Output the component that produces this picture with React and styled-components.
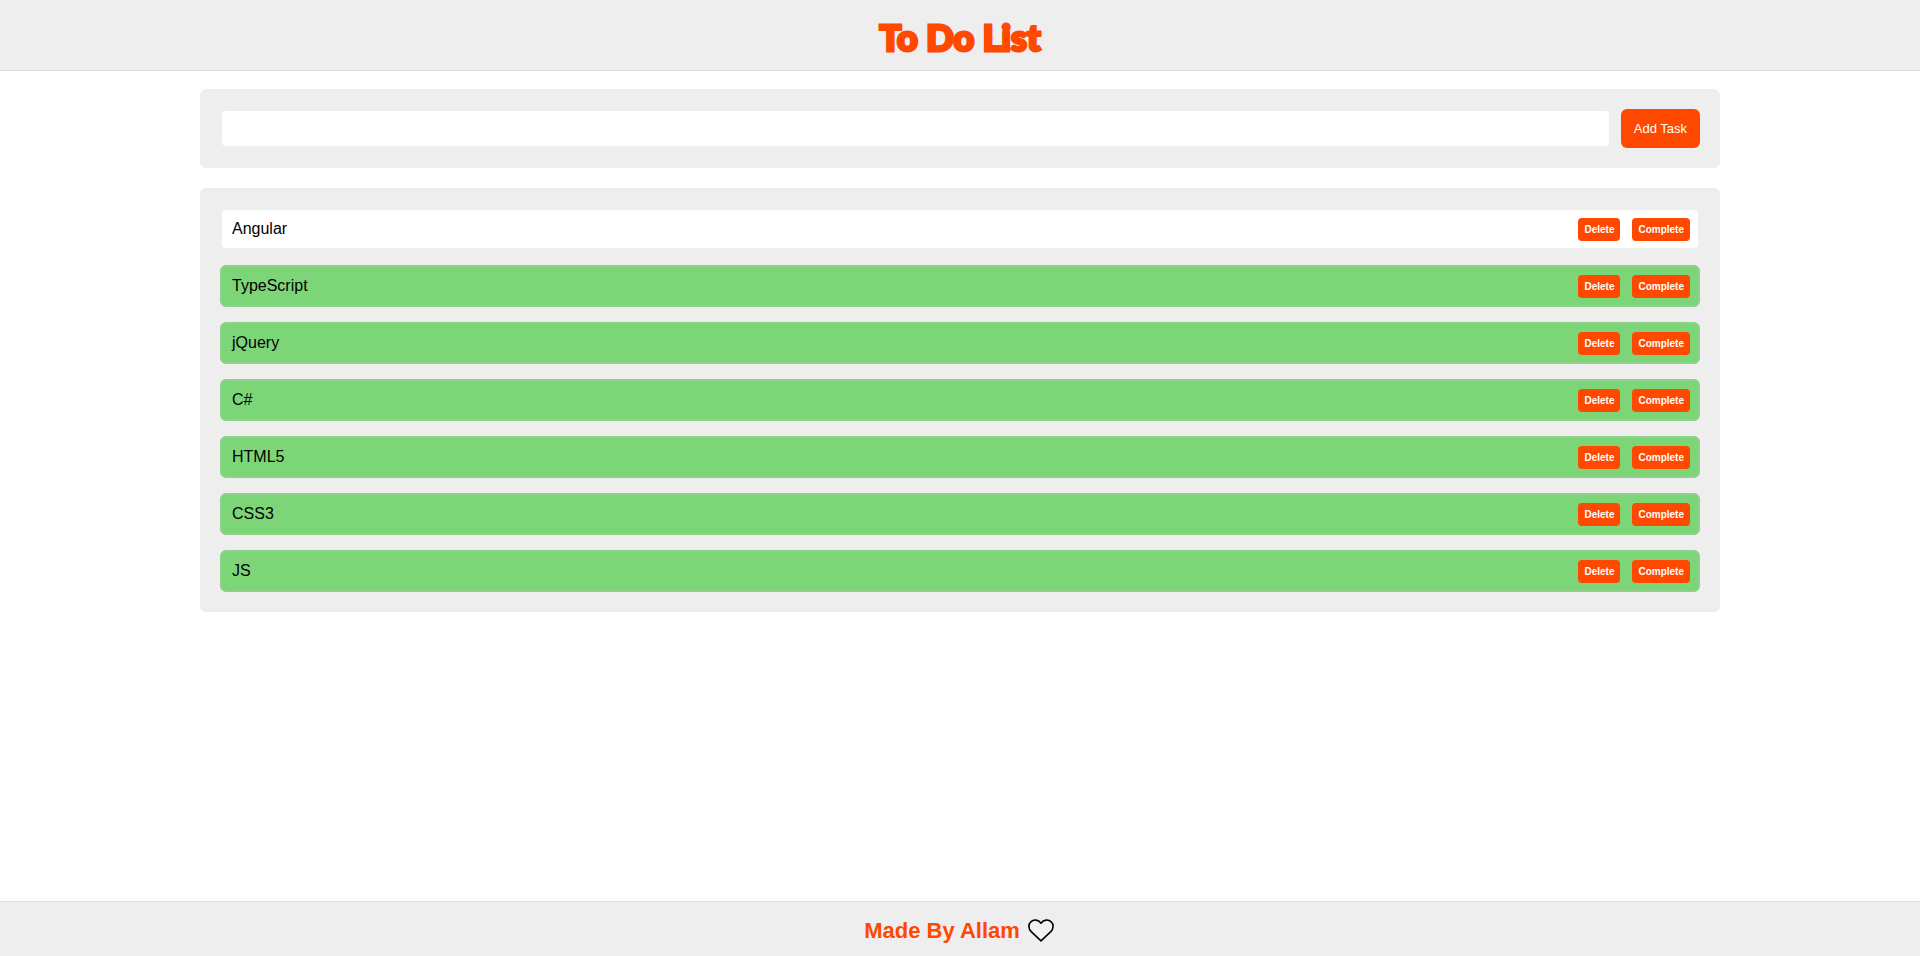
import React, { useState } from "react";
import styled, { createGlobalStyle } from "styled-components";

const GlobalStyle = createGlobalStyle`
  * { box-sizing: border-box; }
  body {
    margin: 0;
    background: #fff;
    font-family: Arial, "Liberation Sans", sans-serif;
  }
`;

const Page = styled.div`
  min-height: 100vh;
  display: flex;
  flex-direction: column;
`;

const Header = styled.header`
  display: flex;
  justify-content: center;
  padding: 17px 20px 13px;
  background: #eee;
  border-bottom: 1px solid #ddd;
`;

const Title = styled.h1`
  margin: 0;
  color: #ff4800;
  font-family: Lato, sans-serif;
  font-size: 36px;
  font-weight: 900;
  line-height: 40px;
  -webkit-text-stroke: 3px #ff4800;
`;

const Main = styled.main`
  flex: 1;
  display: flex;
  flex-direction: column;
  gap: 20px;
  padding: 18px 200px;
`;

const TaskForm = styled.form`
  display: flex;
  gap: 10px;
  padding: 20px;
  background: #eee;
  border-radius: 6px;
`;

const TaskInput = styled.input`
  flex: 1;
  min-width: 0;
  padding: 0 10px;
  font: inherit;
  background: #fff;
  border: 2px solid #eee;
  border-radius: 6px;
  outline: none;
`;

const Button = styled.button`
  border: none;
  color: #fff;
  background: #ff4800;
  font-family: inherit;
  cursor: pointer;
`;

const AddButton = styled(Button)`
  padding: 12px 13px;
  font-size: 13px;
  line-height: 15px;
  border-radius: 6px;
`;

const TaskList = styled.ul`
  list-style: none;
  margin: 0;
  padding: 20px;
  display: flex;
  flex-direction: column;
  gap: 15px;
  background: #eee;
  border-radius: 6px;
`;

const TaskRow = styled.li`
  display: flex;
  align-items: flex-start;
  gap: 12px;
  padding: 8px 8px 7px 10px;
  font-size: 16px;
  line-height: 22px;
  background: ${({ $done }) => ($done ? "#7cd677" : "#fff")};
  border: 2px solid ${({ $done }) => ($done ? "#8fcf8a" : "#eee")};
  border-radius: 6px;
`;

const TaskName = styled.span`
  flex: 1;
`;

const RowButton = styled(Button)`
  padding: 6px;
  font-size: 10px;
  font-weight: bold;
  line-height: 11px;
  border-radius: 4px;
`;

const Footer = styled.footer`
  display: flex;
  justify-content: center;
  align-items: center;
  gap: 8px;
  padding: 16px 22px 12px 20px;
  color: #ff4800;
  background: #eee;
  border-top: 1px solid #ddd;
  font-size: 22px;
  font-weight: bold;
  line-height: 26px;
`;

const initialTasks = [
  { name: "Angular", done: false },
  { name: "TypeScript", done: true },
  { name: "jQuery", done: true },
  { name: "C#", done: true },
  { name: "HTML5", done: true },
  { name: "CSS3", done: true },
  { name: "JS", done: true },
];

function Heart() {
  return (
    <svg width="26" height="24" viewBox="0 0 26 24" aria-hidden="true">
      <path
        d="M13 21.8 L3.2 12.6 C0.2 9.6 0.2 5.2 2.8 2.8 C5.6 0.2 10.4 0.4 13 4.2 C15.6 0.4 20.4 0.2 23.2 2.8 C25.8 5.2 25.8 9.6 22.8 12.6 Z"
        fill="#f2f2f2"
        stroke="#000"
        strokeWidth="1.6"
        strokeLinejoin="round"
      />
    </svg>
  );
}

export default function App() {
  const [tasks, setTasks] = useState(initialTasks);
  const [draft, setDraft] = useState("");

  const addTask = (event) => {
    event.preventDefault();
    if (!draft.trim()) return;
    setTasks([...tasks, { name: draft.trim(), done: false }]);
    setDraft("");
  };
  const removeTask = (index) => setTasks(tasks.filter((_, i) => i !== index));
  const toggleTask = (index) =>
    setTasks(tasks.map((t, i) => (i === index ? { ...t, done: !t.done } : t)));

  return (
    <Page>
      <GlobalStyle />
      <Header>
        <Title>To Do List</Title>
      </Header>
      <Main>
        <TaskForm onSubmit={addTask}>
          <TaskInput
            type="text"
            aria-label="New task"
            value={draft}
            onChange={(event) => setDraft(event.target.value)}
          />
          <AddButton type="submit">Add Task</AddButton>
        </TaskForm>
        <TaskList>
          {tasks.map((task, index) => (
            <TaskRow key={task.name} $done={task.done}>
              <TaskName>{task.name}</TaskName>
              <RowButton type="button" onClick={() => removeTask(index)}>Delete</RowButton>
              <RowButton type="button" onClick={() => toggleTask(index)}>Complete</RowButton>
            </TaskRow>
          ))}
        </TaskList>
      </Main>
      <Footer>
        <span>Made By Allam</span>
        <Heart />
      </Footer>
    </Page>
  );
}
